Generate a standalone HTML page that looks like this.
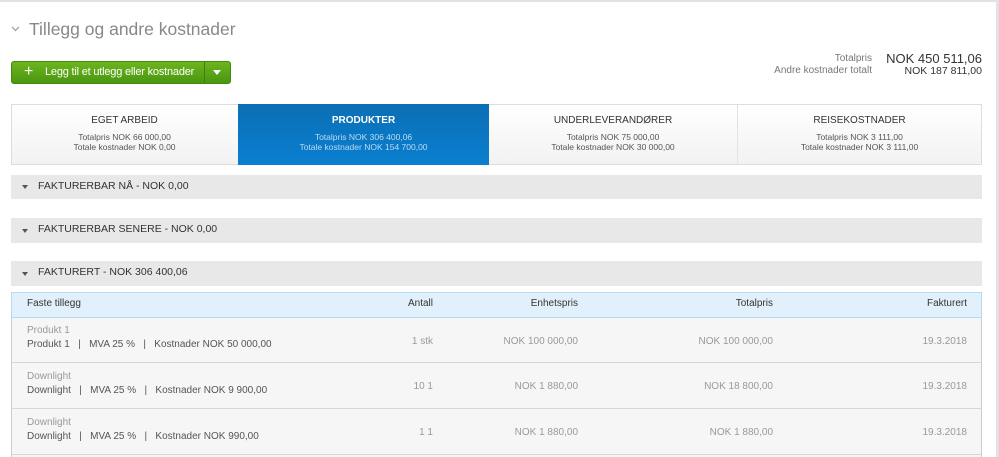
<!DOCTYPE html>
<html><head><meta charset="utf-8"><style>
*{margin:0;padding:0;box-sizing:border-box}
body{width:999px;height:457px;overflow:hidden;background:#fff;font-family:"Liberation Sans",sans-serif;position:relative;color:#333}
.a{position:absolute;white-space:nowrap}
.r{text-align:right}
.c{text-align:center}
</style></head><body>
<div class="a" style="left:0;top:0;width:999px;height:2px;background:#e2e2e2"></div>
<div class="a" style="left:996px;top:0;width:3px;height:457px;background:#e2e2e2"></div>

<svg class="a" style="left:11px;top:26px" width="9" height="6" viewBox="0 0 9 6"><path d="M1 1l3.5 3.5L8 1" fill="none" stroke="#999" stroke-width="1.2"/></svg>
<div class="a" style="left:29px;top:19px;font-size:17.5px;color:#888">Tillegg og andre kostnader</div>

<div class="a" style="left:11px;top:61px;width:220px;height:23px;border-radius:3px;background:linear-gradient(#6cb51f,#4a9610);border:1px solid #438a0d"></div>
<div class="a" style="left:204px;top:62px;width:1px;height:21px;background:#3e7f0c"></div>
<div class="a" style="left:24px;top:63px;font-size:16px;color:#fff">+</div>
<div class="a" style="left:45px;top:66px;font-size:11px;color:#fff;letter-spacing:-0.2px">Legg til et utlegg eller kostnader</div>
<svg class="a" style="left:213px;top:70px" width="8" height="5"><path d="M0 0h8L4 5z" fill="#fff"/></svg>

<div class="a r" style="left:700px;top:53px;width:172px;font-size:10px;color:#777">Totalpris</div>
<div class="a r" style="left:700px;top:65px;width:172px;font-size:10px;color:#777">Andre kostnader totalt</div>
<div class="a r" style="left:850px;top:51px;width:132px;font-size:13px;color:#333">NOK 450 511,06</div>
<div class="a r" style="left:850px;top:65px;width:132px;font-size:10.5px;color:#333">NOK 187 811,00</div>

<div class="a" style="left:11px;top:104px;width:971px;height:61px;border:1px solid #ddd;background:linear-gradient(#fff,#f2f2f2)"></div>
<div class="a" style="left:737px;top:105px;width:1px;height:59px;background:#e3e3e3"></div>
<div class="a" style="left:238px;top:104px;width:251px;height:61px;background:linear-gradient(#0b6fb5,#0a7fd0)"></div>

<div class="a c" style="left:11px;top:115px;width:227px;font-size:10px;color:#333">EGET ARBEID</div>
<div class="a c" style="left:11px;top:132px;width:227px;font-size:8.5px;color:#555">Totalpris NOK 66 000,00<br>Totale kostnader NOK 0,00</div>
<div class="a c" style="left:238px;top:115px;width:251px;font-size:10px;color:#fff;font-weight:bold">PRODUKTER</div>
<div class="a c" style="left:238px;top:132px;width:251px;font-size:8.5px;color:#b9dcf5">Totalpris NOK 306 400,06<br>Totale kostnader NOK 154 700,00</div>
<div class="a c" style="left:489px;top:115px;width:248px;font-size:10px;color:#333">UNDERLEVERANDØRER</div>
<div class="a c" style="left:489px;top:132px;width:248px;font-size:8.5px;color:#555">Totalpris NOK 75 000,00<br>Totale kostnader NOK 30 000,00</div>
<div class="a c" style="left:737px;top:115px;width:245px;font-size:10px;color:#333">REISEKOSTNADER</div>
<div class="a c" style="left:737px;top:132px;width:245px;font-size:8.5px;color:#555">Totalpris NOK 3 111,00<br>Totale kostnader NOK 3 111,00</div>

<div class="a" style="left:11px;top:175px;width:971px;height:24px;background:#e8e8e8"></div>
<div class="a" style="left:11px;top:218px;width:971px;height:25px;background:#e8e8e8"></div>
<div class="a" style="left:11px;top:261px;width:971px;height:25px;background:#e8e8e8"></div>
<svg class="a" style="left:22px;top:185px" width="6" height="4"><path d="M0 0h6L3 4z" fill="#555"/></svg>
<svg class="a" style="left:22px;top:229px" width="6" height="4"><path d="M0 0h6L3 4z" fill="#555"/></svg>
<svg class="a" style="left:22px;top:272px" width="6" height="4"><path d="M0 0h6L3 4z" fill="#555"/></svg>
<div class="a" style="left:38px;top:180px;font-size:10.5px;color:#333">FAKTURERBAR NÅ - NOK 0,00</div>
<div class="a" style="left:38px;top:223px;font-size:10.5px;color:#333">FAKTURERBAR SENERE - NOK 0,00</div>
<div class="a" style="left:38px;top:266px;font-size:10.5px;color:#333">FAKTURERT - NOK 306 400,06</div>

<div class="a" style="left:11px;top:292px;width:971px;height:26px;background:#e1f0fb;border:1px solid #b7dbf0"></div>
<div class="a" style="left:27px;top:298px;font-size:10px;color:#333">Faste tillegg</div>
<div class="a r" style="left:333px;top:298px;width:100px;font-size:10px;color:#333">Antall</div>
<div class="a r" style="left:478px;top:298px;width:100px;font-size:10px;color:#333">Enhetspris</div>
<div class="a r" style="left:673px;top:298px;width:100px;font-size:10px;color:#333">Totalpris</div>
<div class="a r" style="left:867px;top:298px;width:100px;font-size:10px;color:#333">Fakturert</div>

<div class="a" style="left:11px;top:318px;width:971px;height:139px;background:#f6f6f6;border-left:1px solid #ccc;border-right:1px solid #ccc"></div>
<div class="a" style="left:11px;top:362px;width:971px;height:1px;background:#d6d6d6"></div>
<div class="a" style="left:11px;top:408px;width:971px;height:1px;background:#d6d6d6"></div>
<div class="a" style="left:11px;top:454px;width:971px;height:1px;background:#d6d6d6"></div>

<div class="a" style="left:27px;top:325px;font-size:10px;color:#999">Produkt 1</div>
<div class="a" style="left:27px;top:339px;font-size:10px;color:#555">Produkt 1 &nbsp;&nbsp;|&nbsp;&nbsp; MVA 25 % &nbsp;&nbsp;|&nbsp;&nbsp; Kostnader NOK 50 000,00</div>
<div class="a r" style="left:333px;top:336px;width:100px;font-size:10px;color:#999">1 stk</div>
<div class="a r" style="left:428px;top:336px;width:150px;font-size:10px;color:#999">NOK 100 000,00</div>
<div class="a r" style="left:623px;top:336px;width:150px;font-size:10px;color:#999">NOK 100 000,00</div>
<div class="a r" style="left:867px;top:336px;width:100px;font-size:10px;color:#999">19.3.2018</div>

<div class="a" style="left:27px;top:371px;font-size:10px;color:#999">Downlight</div>
<div class="a" style="left:27px;top:385px;font-size:10px;color:#555">Downlight &nbsp;&nbsp;|&nbsp;&nbsp; MVA 25 % &nbsp;&nbsp;|&nbsp;&nbsp; Kostnader NOK 9 900,00</div>
<div class="a r" style="left:333px;top:381px;width:100px;font-size:10px;color:#999">10 1</div>
<div class="a r" style="left:428px;top:381px;width:150px;font-size:10px;color:#999">NOK 1 880,00</div>
<div class="a r" style="left:623px;top:381px;width:150px;font-size:10px;color:#999">NOK 18 800,00</div>
<div class="a r" style="left:867px;top:381px;width:100px;font-size:10px;color:#999">19.3.2018</div>

<div class="a" style="left:27px;top:417px;font-size:10px;color:#999">Downlight</div>
<div class="a" style="left:27px;top:431px;font-size:10px;color:#555">Downlight &nbsp;&nbsp;|&nbsp;&nbsp; MVA 25 % &nbsp;&nbsp;|&nbsp;&nbsp; Kostnader NOK 990,00</div>
<div class="a r" style="left:333px;top:427px;width:100px;font-size:10px;color:#999">1 1</div>
<div class="a r" style="left:428px;top:427px;width:150px;font-size:10px;color:#999">NOK 1 880,00</div>
<div class="a r" style="left:623px;top:427px;width:150px;font-size:10px;color:#999">NOK 1 880,00</div>
<div class="a r" style="left:867px;top:427px;width:100px;font-size:10px;color:#999">19.3.2018</div>
</body></html>
